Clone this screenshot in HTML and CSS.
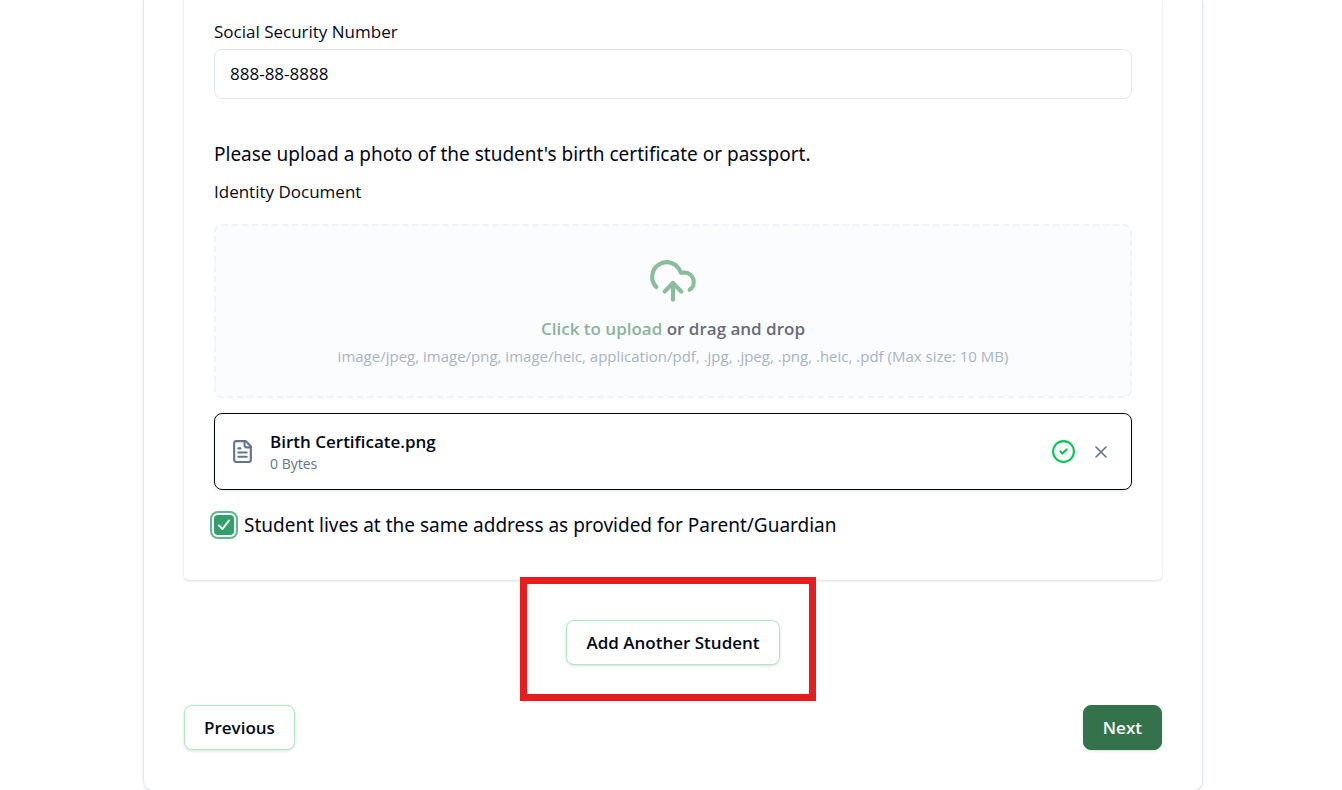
FILE: index.html
```html
<!DOCTYPE html>
<html lang="en">
<head>
<meta charset="utf-8">
<meta name="viewport" content="width=device-width, initial-scale=1">
<title>Student Information</title>
<link rel="stylesheet" href="styles.css">
</head>
<body>
<main class="page">
  <form class="card">
    <section class="panel">
      <div class="field">
        <label class="label" for="ssn">Social Security Number</label>
        <input class="input" id="ssn" type="text" value="888-88-8888">
      </div>
      <p class="prompt">Please upload a photo of the student's birth certificate or passport.</p>
      <span class="label" id="doc-label">Identity Document</span>
      <button class="dropzone" type="button" aria-describedby="doc-label">
        <svg class="cloud" viewBox="0 0 24 24" aria-hidden="true"><path d="M12 13v8"/><path d="M4 14.899A7 7 0 1 1 15.71 8h1.79a4.5 4.5 0 0 1 2.5 8.242"/><path d="m8 17 4-4 4 4"/></svg>
        <span class="drop-title"><span class="accent">Click to upload</span> or drag and drop</span>
        <span class="drop-hint">image/jpeg, image/png, image/heic, application/pdf, .jpg, .jpeg, .png, .heic, .pdf (Max size: 10 MB)</span>
      </button>
      <div class="file">
        <svg class="icon" viewBox="0 0 24 24" aria-hidden="true"><path d="M15 2H6a2 2 0 0 0-2 2v16a2 2 0 0 0 2 2h12a2 2 0 0 0 2-2V7Z"/><path d="M14 2v4a2 2 0 0 0 2 2h4"/><path d="M10 9H8"/><path d="M16 13H8"/><path d="M16 17H8"/></svg>
        <div class="file-info">
          <span class="file-name">Birth Certificate.png</span>
          <span class="file-size">0 Bytes</span>
        </div>
        <svg class="icon done" viewBox="0 0 24 24" aria-hidden="true"><circle cx="12" cy="12" r="10"/><path d="m9 12 2 2 4-4"/></svg>
        <button class="remove" type="button" aria-label="Remove file"><svg class="cross" viewBox="0 0 24 24" aria-hidden="true"><path d="M18 6 6 18"/><path d="m6 6 12 12"/></svg></button>
      </div>
      <div class="check-row">
        <input class="checkbox" id="same-address" type="checkbox" checked>
        <label for="same-address">Student lives at the same address as provided for Parent/Guardian</label>
      </div>
    </section>
    <div class="add-row">
      <div class="highlighted">
        <button class="button" type="button">Add Another Student</button>
        <span class="highlight"></span>
      </div>
    </div>
    <div class="nav-row">
      <button class="button" type="button">Previous</button>
      <button class="button primary" type="submit">Next</button>
    </div>
  </form>
</main>
</body>
</html>
```
FILE: styles.css
```css
* { box-sizing: border-box; }

body {
  margin: 0;
  background: #fff;
  color: #020817;
  font-family: "Segoe UI", "Open Sans", "Noto Sans", sans-serif;
  font-size: 17px;
  line-height: 24px;
}

button, input { font: inherit; color: inherit; }

svg {
  flex: none;
  fill: none;
  stroke: currentColor;
  stroke-width: 2;
  stroke-linecap: round;
  stroke-linejoin: round;
}

.page { padding: 0 139px 0 143px; }

.card {
  padding: 0 40px 40px;
  border: 1px solid #e2e8f0;
  border-top: 0;
  border-radius: 0 0 10px 10px;
  box-shadow: 0 1px 3px rgba(0, 0, 0, .1);
}

.panel {
  display: flex;
  flex-direction: column;
  margin: 0 -1px;
  padding: 20px 30px 40px;
  border: 1px solid #f0f1f3;
  border-top: 0;
  border-bottom-color: #e8e9eb;
  border-radius: 0 0 6px 6px;
  box-shadow: 0 1px 2px rgba(0, 0, 0, .06);
}

.field { display: flex; flex-direction: column; gap: 5px; }

.input {
  width: 100%;
  height: 50px;
  padding: 0 15px 2px;
  border: 1px solid #e2e8f0;
  border-radius: 8px;
  background: #fff;
}

.prompt {
  margin: 40px 0 11px;
  font-family: "Segoe UI", "Noto Sans", sans-serif;
  font-size: 19px;
  line-height: 30px;
}

.dropzone {
  display: flex;
  flex-direction: column;
  align-items: center;
  margin: 20px 0 15px;
  padding: 30px;
  border: 2px dashed #eff2f7;
  border-radius: 8px;
  background: #fbfcfe;
}

.cloud { width: 50px; height: 50px; margin-bottom: 10px; color: #8bbd9d; }
.drop-title { margin-bottom: 5px; color: #686b77; font-weight: 600; line-height: 25px; }
.accent { color: #8ab49b; }
.drop-hint { color: #a9b3c3; font-size: 15px; line-height: 20px; }

.file {
  display: flex;
  align-items: center;
  padding: 15px;
  border: 1px solid #020817;
  border-radius: 8px;
  box-shadow: 0 1px 3px rgba(0, 0, 0, .1);
}

.icon { width: 25px; height: 25px; color: #64748b; }
.file-info { display: flex; flex: 1; flex-direction: column; margin-left: 15px; }
.file-name { font-weight: 600; line-height: 25px; }
.file-size { color: #64748b; font-size: 14px; line-height: 20px; }
.done { margin-right: 10px; color: #00c951; }

.remove {
  display: flex;
  padding: 5px;
  border: 0;
  background: none;
  color: #64748b;
}

.cross { width: 20px; height: 20px; }

.check-row {
  display: flex;
  align-items: center;
  gap: 10px;
  margin-top: 20px;
  font-family: "Segoe UI", "Noto Sans", sans-serif;
  font-size: 19px;
  line-height: 30px;
}

.checkbox {
  appearance: none;
  flex: none;
  width: 20px;
  height: 20px;
  margin: 0;
  border-radius: 4px;
  background: #32a06c url("data:image/svg+xml,%3Csvg xmlns='http://www.w3.org/2000/svg' viewBox='0 0 20 20'%3E%3Cpath d='M5 10.5 8.5 14 15 5.5' fill='none' stroke='white' stroke-width='2' stroke-linecap='round' stroke-linejoin='round'/%3E%3C/svg%3E") center / 20px no-repeat;
  box-shadow: 0 0 0 2px #fff, 0 0 0 4px #62b88e;
}

.add-row { display: flex; justify-content: center; padding: 39px 0 40px; }
.highlighted { position: relative; }

.highlight {
  position: absolute;
  inset: -43px -36px -36px -46px;
  border: 7px solid #e71d1d;
  pointer-events: none;
}

.nav-row { display: flex; justify-content: space-between; }

.button {
  height: 45px;
  padding: 0 19px;
  border: 1px solid #b0e8c4;
  border-radius: 8px;
  background: #fff;
  box-shadow: 0 1px 3px rgba(0, 0, 0, .14);
  font-weight: 600;
}

.primary { border-color: #33724b; background: #33724b; color: #fff; }
```
